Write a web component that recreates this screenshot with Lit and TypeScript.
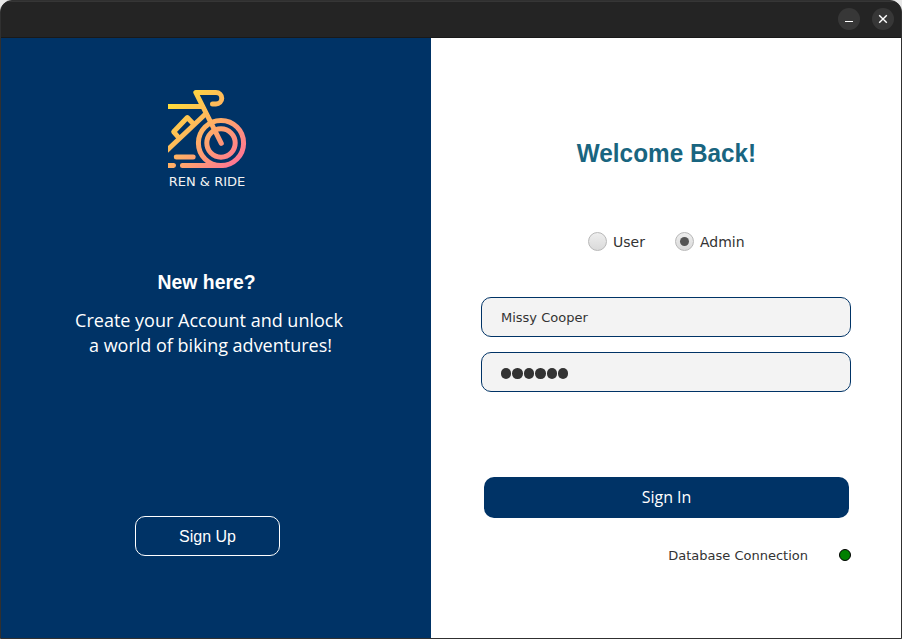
import { LitElement, html, css } from "lit";
import { customElement, state } from "lit/decorators.js";

@customElement("bike-logo")
class BikeLogo extends LitElement {
  static styles = css`
    :host { display: block; width: 80px; height: 80px; }
    svg { display: block; }
  `;
  render() {
    return html`<svg width="80" height="80" viewBox="167 89 80 80" fill="none">
      <defs>
        <linearGradient id="sun" gradientUnits="userSpaceOnUse" x1="170" y1="92" x2="245" y2="168">
          <stop offset="0" stop-color="#ffe532" />
          <stop offset=".5" stop-color="#ffae66" />
          <stop offset="1" stop-color="#fd6a9c" />
        </linearGradient>
        <clipPath id="edge"><rect x="168" y="89" width="79" height="79.5" /></clipPath>
      </defs>
      <g stroke="url(#sun)" stroke-width="5" stroke-linejoin="round" clip-path="url(#edge)">
        <path d="M168 106.51L203.5 106.5" />
        <path stroke-linecap="round" d="M221.3 143.3L195.8 92.5H216a5.75 5.75 0 0 1 0 11.5H212.5" />
        <path d="M206.8 112.8L166 151.2" />
        <path d="M194 124.5L187.3 117.6L173.7 131.8L179 138" />
        <circle cx="221" cy="143" r="22.6" />
        <circle cx="221" cy="143" r="14.2" />
        <path stroke-linecap="round" d="M176.3 157L193.2 157.01" />
        <path d="M168 165.5L174 165.51" />
        <path stroke-linecap="round" d="M172 165.5L173.5 165.51" />
        <path stroke-linecap="round" d="M182.5 165.5L222 165.51" />
      </g>
    </svg>`;
  }
}

@customElement("app-root")
class AppRoot extends LitElement {
  @state() role = "Admin";

  static styles = css`
    :host { display: block; width: 902px; height: 639px; background: #e8e8e8; overflow: hidden; }
    * { box-sizing: border-box; }
    button, input { font: inherit; color: inherit; margin: 0; outline: none; }
    .window { height: 639px; border: 1px solid #303030; border-radius: 12px 12px 0 0; overflow: hidden; background: #242424; display: flex; flex-direction: column; }
    .titlebar { height: 37px; flex: none; display: flex; justify-content: flex-end; align-items: center; gap: 12px; padding: 0 7px 1px 0; background: #242424; border-top: 1px solid #363636; border-bottom: 1px solid #191919; }
    .control { width: 22px; height: 22px; border-radius: 50%; border: 0; padding: 0; background: #373737; }
    .control svg { display: block; }
    .content { flex: 1; display: grid; grid-template-columns: 430px 1fr; }
    .welcome { background: #003366; color: #fff; display: flex; flex-direction: column; align-items: center; padding: 51px 18px 0 0; }
    .brand { font: 13px/16px "DejaVu Sans", sans-serif; margin-top: 5px; color: #f2f2f2; white-space: nowrap; }
    .new { font: bold 20px/24px "Liberation Sans", sans-serif; transform: scaleX(.968); margin: 80px 1px 0 0; white-space: nowrap; }
    .pitch { font: 18px/25px "Open Sans", sans-serif; margin: 14px 0 0 4px; text-align: center; white-space: nowrap; }
    .pitch span { display: block; }
    .pitch span + span { padding-left: 3px; }
    .signup { width: 145px; height: 40px; margin: 158px 0 0 1px; border: 1px solid #fff; border-radius: 10px; background: transparent; font: 16px/20px "Liberation Sans", sans-serif; padding: 2px 0 0; }
    .login { background: #fff; color: #333; display: flex; flex-direction: column; padding: 0 49px 0 50px; font-family: "DejaVu Sans", sans-serif; }
    .title { font: bold 25px/30px "Liberation Sans", sans-serif; transform: scaleX(.973); color: #196580; text-align: center; margin: 100px 0 0; white-space: nowrap; }
    .roles { display: flex; gap: 30px; margin: 63px 0 0 107px; }
    .role { display: flex; align-items: center; gap: 6px; height: 20px; font-size: 14px; line-height: 20px; }
    .label { padding-top: 2px; }
    .radio { width: 19px; height: 19px; border-radius: 50%; border: 1px solid #b8b8b8; background: linear-gradient(#eeeeee, #dadada); display: grid; place-items: center; }
    .radio.on::after { content: ""; width: 9px; height: 9px; border-radius: 50%; background: #555; }
    .field { height: 40px; width: 370px; border: 1px solid #003366; border-radius: 10px; background: #f3f3f3; padding: 0 19px; font-size: 13px; }
    .name { margin-top: 46px; }
    .secret { margin-top: 15px; display: flex; align-items: center; }
    .dots { display: flex; gap: 1px; margin-top: 3px; }
    .dot { width: 10.4px; height: 10.4px; border-radius: 50%; background: #333; }
    .signin { width: 365px; height: 41px; margin: 85px 0 0 3px; border: 0; border-radius: 10px; background: #003366; color: #fff; font: 16px/20px "Open Sans", sans-serif; padding: 0 0 2px; }
    .status { display: flex; align-items: center; justify-content: flex-end; gap: 31px; margin-top: 28px; height: 18px; font-size: 13px; line-height: 19px; white-space: nowrap; }
    .lamp { width: 12px; height: 12px; border-radius: 50%; border: 1px solid #000; background: #008000; margin-right: 1px; }
  `;

  render() {
    return html`<div class="window">
      <header class="titlebar">
        <button class="control" aria-label="Minimize"><svg width="22" height="22"><path d="M7 13.5h8" stroke="#fff" /></svg></button>
        <button class="control" aria-label="Close"><svg width="22" height="22"><path d="M7.2 7.2l7.6 7.6M14.8 7.2l-7.6 7.6" stroke="#fff" stroke-width="1.4" /></svg></button>
      </header>
      <main class="content">
        <section class="welcome">
          <bike-logo></bike-logo>
          <div class="brand">REN &amp; RIDE</div>
          <h2 class="new">New here?</h2>
          <p class="pitch"><span>Create your Account and unlock</span><span>a world of biking adventures!</span></p>
          <button class="signup">Sign Up</button>
        </section>
        <section class="login">
          <h1 class="title">Welcome Back!</h1>
          <div class="roles">
            ${["User", "Admin"].map(
              (r) => html`<div class="role" @click=${() => (this.role = r)}>
                <span class="radio ${this.role === r ? "on" : ""}"></span><span class="label">${r}</span>
              </div>`
            )}
          </div>
          <input class="field name" value="Missy Cooper" />
          <div class="field secret"><div class="dots">${[1, 2, 3, 4, 5, 6].map(() => html`<span class="dot"></span>`)}</div></div>
          <button class="signin">Sign In</button>
          <div class="status"><span>Database Connection</span><span class="lamp"></span></div>
        </section>
      </main>
    </div>`;
  }
}
